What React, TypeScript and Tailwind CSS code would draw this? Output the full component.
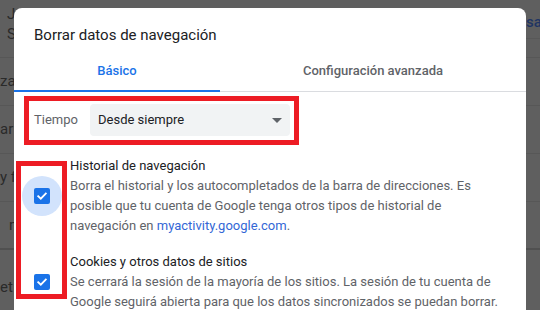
import React from "react";

function Checkbox() {
  return (
    <div className="w-[16px] h-[16px] shrink-0 rounded-[2px] bg-[#1a73e8] flex items-center justify-center">
      <svg width="12" height="12" viewBox="0 0 12 12" fill="none">
        <path d="M2.2 6.2 L4.8 8.7 L9.8 3.5" stroke="#ffffff" strokeWidth="1.8" strokeLinecap="square" />
      </svg>
    </div>
  );
}

export default function App() {
  const font = { fontFamily: "Roboto, 'Noto Sans', Arial, sans-serif" };
  return (
    <div className="relative w-[540px] h-[310px] overflow-hidden bg-[#5f5f5f]" style={font}>
      {/* background page (under scrim) */}
      <div className="flex flex-col text-[15px] text-[#2a2a2a] whitespace-nowrap">
        <div className="h-[57px] flex justify-between">
          <div className="pl-[7px] pt-[4px] flex flex-col leading-[20px]">
            <span>J</span>
            <span>S</span>
          </div>
          <div className="w-[14px] h-[39px] border-b border-[#585858] pt-[12px] leading-[20px] text-[#1f3563] font-medium overflow-hidden">
            <span>sa</span>
          </div>
        </div>
        <div className="h-[48px] border-t border-[#575757] flex items-center">
          <span>zada</span>
        </div>
        <div className="h-[48px] border-t border-[#575757] flex items-center">
          <span>ar t</span>
        </div>
        <div className="h-[48px] border-t border-[#575757] flex items-center">
          <span>y f</span>
        </div>
        <div className="h-[47px] border-t border-[#575757] flex items-center pl-[9px]">
          <span>m</span>
        </div>
        <div className="h-[62px] border-t-2 border-[#505050] flex items-end pb-[12px]">
          <span>et</span>
        </div>
      </div>

      {/* dialog */}
      <div className="absolute left-[14px] top-[8px] w-[512px] h-[330px] bg-white rounded-[8px] flex flex-col">
        <div className="pl-[20px] pt-[17px] pb-[6px] text-[15px] leading-[20px] text-[#202124]">
          Borrar datos de navegación
        </div>
        <div className="flex h-[41px] border-b border-[#dadce0] text-[13px] font-medium">
          <div className="relative w-[206px] flex items-center justify-center text-[#1a73e8]">
            Básico
            <div className="absolute left-0 right-0 bottom-[-1px] h-[2px] bg-[#1a73e8]" />
          </div>
          <div className="flex-1 flex items-center justify-center text-[#5f6368]">
            Configuración avanzada
          </div>
        </div>

        <div className="mt-[12px] flex items-center h-[32px] pl-[20px] text-[13px]">
          <div className="w-[56px] shrink-0 text-[#5f6368]">Tiempo</div>
          <div className="w-[200px] h-[32px] rounded-[4px] bg-[#f1f3f4] flex items-center justify-between pl-[8px] pr-[8px] text-[#202124]">
            <span>Desde siempre</span>
            <svg width="10" height="5" viewBox="0 0 10 5">
              <path d="M0 0 L10 0 L5 5 Z" fill="#5f6368" />
            </svg>
          </div>
        </div>

        <div className="mt-[20px] flex flex-col gap-[16px] text-[13px] leading-[20px]">
          <div className="flex items-center">
            <div className="w-[56px] shrink-0 flex justify-center">
              <div className="w-[40px] h-[40px] rounded-full bg-[#d2e3fc] flex items-center justify-center">
                <Checkbox />
              </div>
            </div>
            <div className="flex flex-col pr-[24px]">
              <span className="text-[#202124]">Historial de navegación</span>
              <span className="text-[#5f6368]">
                Borra el historial y los autocompletados de la barra de direcciones. Es posible que tu cuenta de Google tenga otros tipos de historial de navegación en{" "}
                <span className="text-[#3367d6]">myactivity.google.com</span>.
              </span>
            </div>
          </div>
          <div className="flex items-center">
            <div className="w-[56px] shrink-0 flex justify-center">
              <Checkbox />
            </div>
            <div className="flex flex-col pr-[24px]">
              <span className="text-[#202124]">Cookies y otros datos de sitios</span>
              <span className="text-[#5f6368]">
                Se cerrará la sesión de la mayoría de los sitios. La sesión de tu cuenta de Google seguirá abierta para que los datos sincronizados se puedan borrar.
              </span>
            </div>
          </div>
        </div>
      </div>

      {/* red annotation boxes */}
      <div className="absolute left-[24px] top-[96px] w-[275px] h-[49px] border-[5px] border-[#ed1c24]" />
      <div className="absolute left-[16px] top-[161px] w-[51px] h-[138px] border-[5px] border-[#ed1c24]" />
    </div>
  );
}
